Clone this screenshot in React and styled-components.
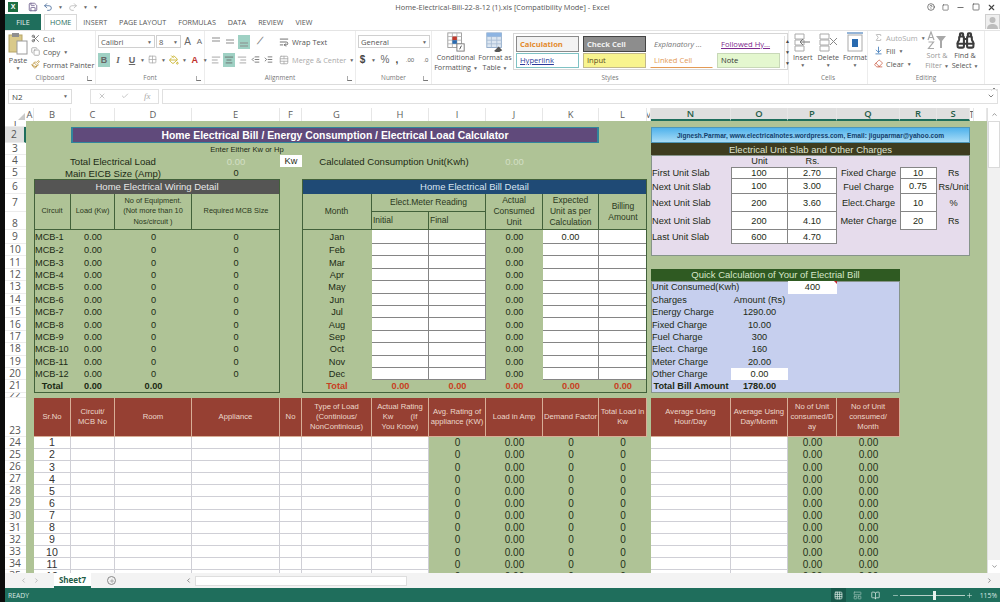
import React from "react";
import styled, { createGlobalStyle, css } from "styled-components";
import {
  Scissors, Copy, Paintbrush, Save, Undo2, Redo2, X, Check, Minus, Plus, Square, HelpCircle,
  AlignLeft, AlignCenter, AlignRight, WrapText, TableCellsMerge, PaintBucket, Grid2x2,
  Binoculars, Sigma, Eraser, ArrowDownToLine, ChevronUp, ChevronDown, ChevronLeft, ChevronRight,
  Grid3x3, LayoutPanelTop, BookOpen, Indent, Outdent,
} from "lucide-react";

const GREEN = "#afc396";
const TEAL = "#1f6e5c";
const RED = "#964033";
const UI = '"Open Sans", "Liberation Sans", sans-serif';
const SHEET = '"Liberation Sans", Arial, sans-serif';

const Global = createGlobalStyle`
  html, body { margin: 0; padding: 0; background: #0c0c0c; }
  * { box-sizing: border-box; }
`;

const Window = styled.div`
  width: 1000px;
  height: 602px;
  padding-left: 5px;
  background: #0c0c0c;
  overflow: hidden;
`;
const Frame = styled.div`
  display: flex;
  flex-direction: column;
  height: 602px;
  background: #fff;
  font-family: ${UI};
  color: #444;
`;

/* title bar */
const TitleBar = styled.div`
  height: 14px;
  display: grid;
  grid-template-columns: 1fr auto 1fr;
  align-items: center;
  padding: 0 3px;
  font-size: 7.4px;
  color: #555;
`;
const Quick = styled.div`
  display: flex;
  align-items: center;
  gap: 5px;
  color: #6a5a8a;
`;
const XlBadge = styled.div`
  width: 10px;
  height: 10px;
  background: #1d6f42;
  color: #fff;
  font: bold 7px/10px ${SHEET};
  text-align: center;
  margin-right: 5px;
`;
const WinButtons = styled.div`
  display: flex;
  justify-content: flex-end;
  align-items: center;
  gap: 7px;
  padding-right: 1px;
  color: #444;
`;

/* tabs */
const TabRow = styled.div`
  height: 16px;
  display: flex;
  align-items: stretch;
  font-size: 7.2px;
`;
const FileTab = styled.div`
  width: 36px;
  background: ${TEAL};
  color: #e8f2ee;
  display: flex;
  align-items: center;
  justify-content: center;
`;
const Tab = styled.div`
  padding: 0 5px 1px;
  margin-left: ${(p) => (p.$active ? 3 : 0)}px;
  display: flex;
  align-items: center;
  color: ${(p) => (p.$active ? "#1f6e5c" : "#555")};
  border: 1px solid ${(p) => (p.$active ? "#d8d8d8" : "transparent")};
  border-bottom: none;
`;
const AvatarBox = styled.div`
  margin-left: auto;
  margin-right: 0;
  width: 15px;
  height: 15px;
  display: flex;
`;

/* ribbon */
const Ribbon = styled.div`
  height: 55px;
  display: flex;
  border-top: 1px solid #e4e4e4;
  border-bottom: 1px solid #dcdcdc;
`;
const Group = styled.div`
  width: ${(p) => p.$w}px;
  display: flex;
  flex-direction: column;
  border-right: 1px solid #ececec;
`;
const GroupBody = styled.div`
  flex: 1;
  min-height: 0;
  display: flex;
  gap: ${(p) => p.$gap || 0}px;
  padding: ${(p) => p.$pad || "2px 2px 0"};
`;
const GroupLabel = styled.div`
  position: relative;
  height: 11px;
  font-size: 6.4px;
  line-height: 10px;
  text-align: center;
  color: #777;
  &::after {
    content: "";
    display: ${(p) => (p.$launcher ? "block" : "none")};
    position: absolute;
    right: 3px;
    bottom: 3px;
    width: 4px;
    height: 4px;
    border-left: 1px solid #aaa;
    border-bottom: 1px solid #777;
  }
`;
const Stack = styled.div`
  display: flex;
  flex-direction: column;
  align-items: ${(p) => p.$align || "flex-start"};
  gap: ${(p) => p.$gap || 0}px;
  width: ${(p) => (p.$w ? `${p.$w}px` : "auto")};
`;
const Line = styled.div`
  display: flex;
  align-items: center;
  gap: ${(p) => p.$gap || 3}px;
  height: 13px;
  font-size: 7.4px;
  color: ${(p) => p.$color || "#555"};
  white-space: nowrap;
`;
const BigLabel = styled.div`
  font-size: 7.2px;
  line-height: 10px;
  text-align: center;
  white-space: nowrap;
  color: ${(p) => p.$color || "#555"};
`;
const Field = styled.div`
  width: ${(p) => p.$w}px;
  height: 13px;
  border: 1px solid #d0d0d0;
  font-size: 7.6px;
  display: flex;
  align-items: center;
  justify-content: space-between;
  padding: 0 2px;
  color: #555;
`;
const ToolIcon = styled.div`
  width: ${(p) => p.$w || 12}px;
  height: 14px;
  display: flex;
  align-items: center;
  justify-content: center;
  background: ${(p) => (p.$on ? "#9fd1c4" : "transparent")};
  color: ${(p) => p.$color || "#666"};
  font: ${(p) => p.$font || `bold 9px ${SHEET}`};
  text-decoration: ${(p) => (p.$under ? "underline" : "none")};
`;
const Caret = styled.span`
  font-size: 5px;
  color: #666;
`;
const Gallery = styled.div`
  width: 275px;
  height: 37px;
  margin-top: 1px;
  border: 1px solid #d6d6d6;
  display: grid;
  grid-template-columns: repeat(4, 66px) 1fr;
  grid-template-rows: 1fr 1fr;
  gap: 1px;
  padding: 2px 0 1px 2px;
`;
const Chip = styled.div`
  margin-right: 3px;
  display: flex;
  align-items: center;
  padding-left: 3px;
  font: ${(p) => (p.$bold ? "bold " : "")}${(p) => (p.$italic ? "italic " : "")}7.6px ${UI};
  color: ${(p) => p.$color};
  background: ${(p) => p.$bg || "#fff"};
  border: 1px solid ${(p) => p.$border || "transparent"};
  border-bottom-color: ${(p) => p.$line || p.$border || "transparent"};
  text-decoration: ${(p) => (p.$under ? "underline" : "none")};
  white-space: nowrap;
`;
const GalleryScroll = styled.div`
  grid-column: 5;
  grid-row: 1 / span 2;
  border-left: 1px solid #e2e2e2;
  display: flex;
  flex-direction: column;
  align-items: center;
  justify-content: space-around;
  font-size: 5px;
`;
const Collapse = styled.div`
  padding: 45px 0 0 5px;
`;

/* formula bar */
const FormulaRow = styled.div`
  height: 16px;
  margin-top: 3px;
  display: flex;
  align-items: center;
  gap: 3px;
  padding: 0 2px 0 3px;
  margin-bottom: 4px;
`;
const NameBox = styled.div`
  width: 64px;
  height: 15px;
  border: 1px solid #dcdcdc;
  display: flex;
  align-items: center;
  justify-content: space-between;
  padding: 0 3px;
  font-size: 8px;
`;
const FxBox = styled.div`
  width: 69px;
  margin-left: 15px;
  height: 15px;
  border: 1px solid #e0e0e0;
  display: flex;
  align-items: center;
  justify-content: space-around;
  color: #aaa;
  font: italic 9px "Liberation Serif", serif;
`;
const FormulaInput = styled.div`
  flex: 1;
  height: 15px;
  border: 1px solid #e0e0e0;
  display: flex;
  justify-content: flex-end;
  align-items: center;
  padding-right: 2px;
`;

/* sheet */
const SheetRow = styled.div`
  display: flex;
  height: 465px;
`;
const colWidths = [21, 8, 37, 44, 77, 88, 22, 70, 57, 57, 57, 56, 48, 4, 80, 57, 49, 63, 37, 33, 4, 13];
const rowHeights = [
  13, 6, 16, 12, 12, 12, 15, 18, 18, 14,
  ...Array(12).fill(12.4),
  5, 39,
  ...Array(12).fill(12.15),
];
const Sheet = styled.div`
  width: 982px;
  height: 465px;
  overflow: hidden;
  display: grid;
  grid-template-columns: ${colWidths.map((w) => `${w}px`).join(" ")};
  grid-template-rows: ${rowHeights.map((h) => `${h}px`).join(" ")};
  background: linear-gradient(#fff, #fff) 0 0 / 100% 13px no-repeat,
    linear-gradient(#fff, #fff) 0 0 / 21px 100% no-repeat, ${GREEN};
  font-family: ${SHEET};
  color: #1c2a14;
`;
const place = css`
  grid-column: ${(p) => p.$c} / span ${(p) => p.$cs || 1};
  grid-row: ${(p) => p.$r + 1} / span ${(p) => p.$rs || 1};
`;
const Cell = styled.div`
  ${place}
  display: flex;
  align-items: center;
  justify-content: center;
  text-align: center;
  overflow: hidden;
  white-space: nowrap;
  min-width: 0;
`;
const Corner = styled.div`
  grid-column: 1;
  grid-row: 1;
  position: relative;
  &::after {
    content: "";
    position: absolute;
    right: 1px;
    bottom: 1px;
    border-left: 7px solid transparent;
    border-bottom: 7px solid #c9c9c9;
  }
`;
const ColHead = styled.div`
  grid-column: ${(p) => p.$c};
  grid-row: 1;
  display: flex;
  align-items: center;
  justify-content: center;
  overflow: hidden;
  font: ${(p) => (p.$on ? "600 " : "")}9.4px ${UI};
  color: ${(p) => (p.$on ? "#1f5c46" : "#5c5c5c")};
  background: ${(p) => (p.$on ? "#dfdfdf" : "#fff")};
  border-right: 1px solid #e6e6e6;
  border-bottom: ${(p) => (p.$on ? "2px solid #1f6e5c" : "none")};
`;
const RowHead = styled.div`
  grid-column: 1;
  grid-row: ${(p) => p.$r + 1};
  display: flex;
  align-items: ${(p) => (p.$tall ? "flex-end" : "center")};
  justify-content: center;
  overflow: hidden;
  padding-right: 1px;
  font: 10.2px/11px ${UI};
  color: #555;
  background: ${(p) => (p.$on ? "#dfdfdf" : "#fff")};
  border-bottom: 1px solid #ececec;
  border-right: ${(p) => (p.$on ? "2px solid #1f6e5c" : "none")};
`;
const Banner = styled(Cell)`
  background: #604a7b;
  border: 2px solid #31859c;
  border-width: 1px 2px;
  color: #fff;
  font-weight: bold;
  font-size: 10.4px;
`;
const Hint = styled(Cell)`
  font-size: 7.6px;
`;
const BigLabelCell = styled(Cell)`
  font-size: 9.6px;
`;
const GhostValue = styled(Cell)`
  font-size: 9.5px;
  color: #d3dfc5;
`;
const Plain = styled(Cell)`
  font-size: 9.2px;
  justify-content: ${(p) => (p.$left ? "flex-start" : "center")};
  padding-left: ${(p) => (p.$left ? "1px" : "0")};
  font-weight: ${(p) => (p.$bold ? "bold" : "normal")};
  color: ${(p) => p.$color || "inherit"};
`;
const WhiteBox = styled(Plain)`
  background: #fff;
`;
const Entry = styled(Plain)`
  background: #fff;
  border-right: 1px solid #858585;
  border-bottom: 1px solid #858585;
`;
const SectionHead = styled(Cell)`
  background: ${(p) => p.$bg};
  color: ${(p) => p.$color || "#e8e8e8"};
  font-size: 9.5px;
`;
const Outline = styled.div`
  ${place}
  border: 1px solid ${(p) => p.$color || "#42613a"};
  z-index: 2;
  pointer-events: none;
`;
const TableHead = styled(Cell)`
  font-size: ${(p) => p.$size || 7.4}px;
  line-height: ${(p) => (p.$size ? 11 : 10.5)}px;
  white-space: pre-line;
  color: #2a3820;
  border-right: ${(p) => (p.$last ? "none" : "1px solid #42613a")};
  border-bottom: 1px solid #42613a;
  justify-content: ${(p) => (p.$left ? "flex-start" : "center")};
  padding-left: ${(p) => (p.$left ? "1px" : "0")};
`;
const Panel = styled.div`
  ${place}
  background: ${(p) => p.$bg};
  border: 1px solid #86948a;
`;
const Credit = styled(Cell)`
  background: linear-gradient(#4fb2ec, #a8dcf6);
  border: 1px solid #4f97b8;
  color: #123e6c;
  font-weight: bold;
  font-size: 6.6px;
`;
const RedHead = styled(Cell)`
  background: ${RED};
  color: #ecd8cb;
  white-space: pre;
  font-size: 7.7px;
  line-height: 10px;
  border-right: 1px solid #d8ae97;
  border-bottom: 1px solid #d8ae97;
`;
const BlankRow = styled.div`
  ${place}
  background: #fff;
  border-right: 1px solid #cfcfd6;
  border-bottom: 1px solid #cfcfd6;
`;
const SrNo = styled(Cell)`
  background: #fff;
  font-size: 10.6px;
  color: #333;
  border-right: 1px solid #cfcfd6;
  border-bottom: 1px solid #cfcfd6;
`;
const Calc = styled(Cell)`
  font-size: 10px;
  color: #1f3116;
`;
const Marker = styled.span`
  position: absolute;
  top: 0;
  right: 0;
  border-top: 3px solid #c4262e;
  border-left: 3px solid transparent;
`;
const Anchor = styled(WhiteBox)`
  position: relative;
`;

/* scrollbar, sheet tabs, status */
const VScroll = styled.div`
  width: 13px;
  display: flex;
  flex-direction: column;
  justify-content: flex-start;
  background: #f1f1f1;
  border-left: 1px solid #e0e0e0;
  color: #555;
`;
const ScrollEnd = styled.div`
  height: 13px;
  background: #fff;
  display: flex;
  align-items: center;
  justify-content: center;
  margin-top: ${(p) => (p.$last ? "auto" : "0")};
`;
const ScrollThumb = styled.div`
  height: 47px;
  background: #fff;
  border: 1px solid #dadada;
`;
const TabBar = styled.div`
  height: 15px;
  display: flex;
  align-items: center;
  background: #f3f3f3;
  color: #999;
`;
const TabNav = styled.div`
  width: 49px;
  display: flex;
  justify-content: center;
  gap: 6px;
`;
const SheetTab = styled.div`
  width: 37px;
  height: 15px;
  background: #fff;
  border-bottom: 2px solid #1f6e5c;
  font: bold 8px/13px ${UI};
  text-align: center;
  color: #1f5c46;
`;
const AddSheet = styled.div`
  width: 9px;
  height: 9px;
  margin-left: 16px;
  border: 1px solid #888;
  border-radius: 50%;
  display: flex;
  align-items: center;
  justify-content: center;
  color: #777;
`;
const HScroll = styled.div`
  margin-left: 69px;
  flex: 1;
  height: 13px;
  display: flex;
  align-items: center;
  color: #444;
  padding-right: 7px;
`;
const HThumb = styled.div`
  width: 212px;
  height: 10px;
  margin: 0 auto 0 3px;
  background: #fff;
  border: 1px solid #dedede;
`;
const StatusBar = styled.div`
  height: 14px;
  background: ${TEAL};
  color: #d8e8e2;
  display: flex;
  align-items: center;
  padding: 0 3px;
  font-size: 6.8px;
`;
const StatusRight = styled.div`
  margin-left: auto;
  display: flex;
  align-items: center;
  padding-right: 0;
`;
const ViewIcon = styled.div`
  width: 15px;
  height: 14px;
  margin-right: 3.5px;
  display: flex;
  align-items: center;
  justify-content: center;
  background: ${(p) => (p.$on ? "#17584a" : "transparent")};
  opacity: ${(p) => (p.$dim ? 0.65 : 1)};
`;
const ZoomTrack = styled.div`
  position: relative;
  width: 65px;
  height: 1px;
  margin: 0 1px;
  background: #b8d0c8;
`;
const ZoomKnob = styled.span`
  position: absolute;
  left: 33px;
  top: -4px;
  width: 3px;
  height: 9px;
  background: #e8f2ee;
`;
const ZoomGroup = styled.div`
  display: flex;
  align-items: center;
  margin: 0 7px 0 5px;
`;

const AvatarIcon = () => (
  <svg width="15" height="15" viewBox="0 0 15 15">
    <rect width="15" height="15" fill="#cfcfcf" />
    <rect x="1" y="1" width="13" height="14" fill="#efefef" />
    <circle cx="7.5" cy="6" r="3" fill="#bdbdbd" />
    <path d="M2 15c0-4 3-5 5.500-5s5.500 1 5.500 5z" fill="#bdbdbd" />
  </svg>
);
const PasteIcon = () => (
  <svg width="20" height="23" viewBox="0 0 20 23">
    <rect x="1" y="3" width="13" height="17" fill="#d9c98a" stroke="#b7a567" />
    <rect x="4" y="1" width="7" height="4" fill="#8f8f8f" />
    <rect x="9" y="9" width="10" height="13" fill="#fff" stroke="#9a9a9a" />
  </svg>
);
const CondFormatIcon = () => (
  <svg width="20" height="22" viewBox="0 0 20 22">
    <rect x="1" y="1" width="15" height="16" fill="#fff" stroke="#9a9a9a" />
    <path d="M1 5h15M1 9h15M1 13h15M6 1v16M11 1v16" stroke="#b5b5b5" fill="none" />
    <rect x="6" y="5" width="5" height="4" fill="#c0392b" />
    <rect x="6" y="9" width="5" height="4" fill="#2a6bb0" />
    <rect x="11" y="13" width="8" height="8" fill="#fff" stroke="#777" />
    <path d="M14 19l2-4" stroke="#444" />
  </svg>
);
const TableIcon = () => (
  <svg width="20" height="22" viewBox="0 0 20 22">
    <rect x="1" y="1" width="16" height="16" fill="#dce6f1" stroke="#8ea9c8" />
    <path d="M1 5h16M1 9h16M1 13h16M6 1v16M12 1v16" stroke="#a9bdd4" fill="none" />
    <rect x="1" y="1" width="16" height="4" fill="#8db4e2" />
    <path d="M9 21l5-5 4 4-5 3z" fill="#555" />
  </svg>
);
const CellsIcon = ({ mark }) => (
  <svg width="20" height="20" viewBox="0 0 20 20">
    <path d="M2 2h9v5H2zM2 8h9v5H2zM2 14h9v5H2z" fill="#fff" stroke="#aaa" />
    {mark === "in" && <path d="M17 10H7m3-3l-3 3 3 3" stroke="#777" fill="none" />}
    {mark === "del" && <path d="M12 6l7 7m0-7l-7 7" stroke="#888" fill="none" />}
  </svg>
);
const FormatIcon = () => (
  <svg width="20" height="20" viewBox="0 0 20 20">
    <rect x="3" y="3" width="14" height="16" fill="#fff" stroke="#aaa" />
    <rect x="7" y="7" width="6" height="8" fill="#2a6bb0" />
    <path d="M2 1h16" stroke="#2a6bb0" />
  </svg>
);
const SortIcon = () => (
  <svg width="20" height="19" viewBox="0 0 20 19">
    <path d="M1 9L4 1l3 8M2.200 6.500h3.600M1.500 11h5l-5 6.500h5.500" stroke="#a8a8a8" strokeWidth="1.200" fill="none" />
    <path d="M9 5h10l-4 5v7h-2v-7z" fill="#a8a8a8" />
  </svg>
);
const VAlignIcon = ({ y }) => (
  <svg width="10" height="10" viewBox="0 0 10 10">
    <path d={`M1 ${y}h8M1 ${y + 3}h8`} stroke="#8b8b8b" fill="none" />
  </svg>
);

const columns = [
  [2, "A"], [3, "B"], [4, "C"], [5, "D"], [6, "E"], [7, "F"], [8, "G"], [9, "H"], [10, "I"], [11, "J"],
  [12, "K"], [13, "L"], [14, "M"], [15, "N", 1], [16, "O", 1], [17, "P", 1], [18, "Q", 1], [19, "R", 1],
  [20, "S", 1], [21, "T"], [22, ""],
];
const months = ["Jan", "Feb", "Mar", "Apr", "May", "Jun", "Jul", "Aug", "Sep", "Oct", "Nov", "Dec"];
const slabs = [
  ["First Unit Slab", "100", "2.70", "Fixed Charge", "10", "Rs"],
  ["Next Unit Slab", "100", "3.00", "Fuel Charge", "0.75", "Rs/Unit"],
  ["Next Unit Slab", "200", "3.60", "Elect.Charge", "10", "%"],
  ["Next Unit Slab", "200", "4.10", "Meter Charge", "20", "Rs"],
  ["Last Unit Slab", "600", "4.70"],
];
const quick = [
  ["Charges", "Amount (Rs)"],
  ["Energy Charge", "1290.00"],
  ["Fixed Charge", "10.00"],
  ["Fuel Charge", "300"],
  ["Elect. Charge", "160"],
  ["Meter Charge", "20.00"],
];
const loadHeads = [
  [3, "Sr.No"], [4, "Circuit/\nMCB No"], [5, "Room"], [6, "Appliance"], [7, "No"],
  [8, "Type of Load\n(Continious/\nNonContinious)"], [9, "Actual Rating\nKw        (If\nYou Know)"],
  [10, "Avg. Rating of\nappliance (KW)"], [11, "Load in Amp"], [12, "Demand Factor"], [13, "Total Load in\nKw"],
  [15, "Average Using\nHour/Day"], [16, "Average Using\nDay/Month"],
  [17, "No of Unit\nconsumed/D\nay"], [18, "No of Unit\nconsumed/\nMonth"],
];
const range = (a, b) => Array.from({ length: b - a + 1 }, (_, i) => a + i);

function Toolbar() {
  return (
    <>
      <TitleBar>
        <Quick>
          <XlBadge>X</XlBadge>
          <Save size={10} />
          <Undo2 size={10} color="#4a6d9c" />
          <Caret>▼</Caret>
          <Redo2 size={10} color="#bbb" />
          <Caret>▼</Caret>
          <Caret>▼</Caret>
        </Quick>
        <div>Home-Electrical-Bill-22-8-12 (1).xls  [Compatibility Mode] - Excel</div>
        <WinButtons>
          <HelpCircle size={8} />
          <Square size={7} />
          <Minus size={9} />
          <Square size={8} />
          <X size={9} strokeWidth={3} />
        </WinButtons>
      </TitleBar>
      <TabRow>
        <FileTab>FILE</FileTab>
        <Tab $active>HOME</Tab>
        <Tab>INSERT</Tab>
        <Tab>PAGE LAYOUT</Tab>
        <Tab>FORMULAS</Tab>
        <Tab>DATA</Tab>
        <Tab>REVIEW</Tab>
        <Tab>VIEW</Tab>
        <AvatarBox><AvatarIcon /></AvatarBox>
      </TabRow>
      <Ribbon>
        <Group $w={91}>
          <GroupBody $gap={3} $pad="1px 2px 0 3px">
            <Stack $align="center" $w={26}>
              <PasteIcon />
              <BigLabel>Paste</BigLabel>
              <Caret>▼</Caret>
            </Stack>
            <Stack>
              <Line><Scissors size={9} />Cut</Line>
              <Line><Copy size={9} color="#999" />Copy <Caret>▼</Caret></Line>
              <Line><Paintbrush size={9} color="#b58a2a" />Format Painter</Line>
            </Stack>
          </GroupBody>
          <GroupLabel $launcher>Clipboard</GroupLabel>
        </Group>
        <Group $w={109}>
          <GroupBody $pad="4px 0 0 2px">
            <Stack $gap={5}>
              <Line $gap={1}>
                <Field $w={57}>Calibri<Caret>▼</Caret></Field>
                <Field $w={25}>8<Caret>▼</Caret></Field>
                <ToolIcon $w={11} $font={`10px ${SHEET}`}>A</ToolIcon>
                <ToolIcon $w={11} $font={`8px ${SHEET}`}>A</ToolIcon>
              </Line>
              <Line $gap={2}>
                <ToolIcon $on>B</ToolIcon>
                <ToolIcon $font={`italic bold 9px "Liberation Serif", serif`}>I</ToolIcon>
                <ToolIcon $under>U</ToolIcon>
                <Caret>▼</Caret>
                <ToolIcon $color="#aaa"><Grid2x2 size={9} /></ToolIcon>
                <Caret>▼</Caret>
                <ToolIcon $color="#c7b020"><PaintBucket size={10} /></ToolIcon>
                <Caret>▼</Caret>
                <ToolIcon $color="#c0302a">A</ToolIcon>
                <Caret>▼</Caret>
              </Line>
            </Stack>
          </GroupBody>
          <GroupLabel $launcher>Font</GroupLabel>
        </Group>
        <Group $w={151}>
          <GroupBody $pad="4px 0 0 5px" $gap={5}>
            <Stack $gap={5}>
              <Line $gap={2}>
                <ToolIcon><VAlignIcon y={1} /></ToolIcon>
                <ToolIcon><VAlignIcon y={3} /></ToolIcon>
                <ToolIcon $on><VAlignIcon y={6} /></ToolIcon>
                <ToolIcon $color="#888" $w={16}>⟋</ToolIcon>
              </Line>
              <Line $gap={1}>
                <ToolIcon $color="#999"><AlignLeft size={10} /></ToolIcon>
                <ToolIcon $on><AlignCenter size={10} /></ToolIcon>
                <ToolIcon $color="#999"><AlignRight size={10} /></ToolIcon>
                <ToolIcon $color="#555"><Outdent size={9} /></ToolIcon>
                <ToolIcon $color="#555"><Indent size={9} /></ToolIcon>
              </Line>
            </Stack>
            <Stack $gap={5}>
              <Line><WrapText size={10} />Wrap Text</Line>
              <Line $color="#aaa"><TableCellsMerge size={10} />Merge &amp; Center <Caret>▼</Caret></Line>
            </Stack>
          </GroupBody>
          <GroupLabel $launcher>Alignment</GroupLabel>
        </Group>
        <Group $w={76}>
          <GroupBody $pad="4px 0 0 2px">
            <Stack $gap={5}>
              <Field $w={72}>General<Caret>▼</Caret></Field>
              <Line $gap={4}>
                <ToolIcon $w={9} $font={`bold 10px ${SHEET}`} $color="#444">$</ToolIcon>
                <Caret>▼</Caret>
                <ToolIcon $w={10} $font={`10px ${SHEET}`}>%</ToolIcon>
                <ToolIcon $w={6} $font={`bold 10px ${SHEET}`} $color="#444">,</ToolIcon>
                <ToolIcon $font={`6px ${SHEET}`}>.00</ToolIcon>
                <ToolIcon $font={`6px ${SHEET}`}>.0</ToolIcon>
              </Line>
            </Stack>
          </GroupBody>
          <GroupLabel $launcher>Number</GroupLabel>
        </Group>
        <Group $w={357}>
          <GroupBody $pad="1px 0 0 3px" $gap={3}>
            <Stack $align="center" $w={42}>
              <CondFormatIcon />
              <BigLabel>Conditional</BigLabel>
              <BigLabel>Formatting <Caret>▼</Caret></BigLabel>
            </Stack>
            <Stack $align="center" $w={30}>
              <TableIcon />
              <BigLabel>Format as</BigLabel>
              <BigLabel>Table <Caret>▼</Caret></BigLabel>
            </Stack>
            <Gallery>
              <Chip $bold $color="#e38a2c" $bg="#f2f2f2" $border="#8a8a8a">Calculation</Chip>
              <Chip $bold $color="#f0f0f0" $bg="#8d8d8d" $border="#444">Check Cell</Chip>
              <Chip $italic $color="#777">Explanatory ...</Chip>
              <Chip $under $color="#7d2a8c">Followed Hy...</Chip>
              <GalleryScroll>
                <span>▲</span><span>▼</span><span>▼</span>
              </GalleryScroll>
              <Chip $under $color="#2a3a9a" $border="#7fc2c4">Hyperlink</Chip>
              <Chip $color="#5a4a20" $bg="#f8f48e" $border="#c2b98a">Input</Chip>
              <Chip $color="#e39a55" $line="#e39a55">Linked Cell</Chip>
              <Chip $color="#333" $bg="#e4f7cf" $border="#c8d8b8">Note</Chip>
            </Gallery>
          </GroupBody>
          <GroupLabel>Styles</GroupLabel>
        </Group>
        <Group $w={79}>
          <GroupBody $pad="1px 0 0 3px" $gap={3}>
            <Stack $align="center" $w={22}>
              <CellsIcon mark="in" />
              <BigLabel>Insert</BigLabel>
              <Caret>▼</Caret>
            </Stack>
            <Stack $align="center" $w={24}>
              <CellsIcon mark="del" />
              <BigLabel>Delete</BigLabel>
              <Caret>▼</Caret>
            </Stack>
            <Stack $align="center" $w={24}>
              <FormatIcon />
              <BigLabel>Format</BigLabel>
              <Caret>▼</Caret>
            </Stack>
          </GroupBody>
          <GroupLabel>Cells</GroupLabel>
        </Group>
        <Group $w={117}>
          <GroupBody $pad="0 0 0 6px" $gap={3}>
            <Stack $w={48}>
              <Line $color="#aaa"><Sigma size={9} />AutoSum <Caret>▼</Caret></Line>
              <Line><ArrowDownToLine size={9} color="#2a6bb0" />Fill <Caret>▼</Caret></Line>
              <Line><Eraser size={9} color="#c8553d" />Clear <Caret>▼</Caret></Line>
            </Stack>
            <Stack $align="center" $w={24}>
              <SortIcon />
              <BigLabel $color="#999">Sort &amp;</BigLabel>
              <BigLabel $color="#999">Filter <Caret>▼</Caret></BigLabel>
            </Stack>
            <Stack $align="center" $w={26}>
              <Binoculars size={19} color="#3c3c3c" strokeWidth={2.6} />
              <BigLabel>Find &amp;</BigLabel>
              <BigLabel>Select <Caret>▼</Caret></BigLabel>
            </Stack>
          </GroupBody>
          <GroupLabel>Editing</GroupLabel>
        </Group>
        <Collapse><ChevronUp size={8} /></Collapse>
      </Ribbon>
      <FormulaRow>
        <NameBox>N2<Caret>▼</Caret></NameBox>
        <FxBox><X size={8} /><Check size={8} /><span>fx</span></FxBox>
        <FormulaInput><ChevronDown size={8} /></FormulaInput>
      </FormulaRow>
    </>
  );
}

function SheetGrid() {
  return (
    <Sheet>
      <Corner />
      {columns.map(([c, name, on]) => (
        <ColHead key={c} $c={c} $on={on}>{name}</ColHead>
      ))}
      {range(1, 35).map((r) => (
        <RowHead key={r} $r={r} $on={r === 2} $tall={r === 8 || r === 23}>{r}</RowHead>
      ))}

      <Banner $c={4} $cs={9} $r={2}>Home Electrical Bill / Energy Consumption / Electrical Load Calculator</Banner>
      <Hint $c={6} $cs={2} $r={3}>Enter Either Kw or Hp</Hint>
      <BigLabelCell $c={3} $cs={3} $r={4}>Total Electrical Load</BigLabelCell>
      <GhostValue $c={6} $r={4}>0.00</GhostValue>
      <WhiteBox $c={7} $r={4}>Kw</WhiteBox>
      <BigLabelCell $c={8} $cs={3} $r={4}>Calculated Consumption Unit(Kwh)</BigLabelCell>
      <GhostValue $c={11} $r={4}>0.00</GhostValue>
      <BigLabelCell $c={3} $cs={3} $r={5}>Main EICB Size (Amp)</BigLabelCell>
      <Plain $c={6} $r={5}>0</Plain>

      {/* wiring detail */}
      <SectionHead $c={3} $cs={4} $r={6} $bg="#555554">Home Electrical Wiring Detail</SectionHead>
      <TableHead $c={3} $r={7} $rs={2}>Circuit</TableHead>
      <TableHead $c={4} $r={7} $rs={2}>Load (Kw)</TableHead>
      <TableHead $c={5} $r={7} $rs={2}>{"No of Equipment.\n(Not more than 10\nNos/circuit )"}</TableHead>
      <TableHead $c={6} $r={7} $rs={2} $last>Required MCB Size</TableHead>
      {range(1, 12).map((n) => (
        <React.Fragment key={n}>
          <Plain $c={3} $r={n + 8} $left>MCB-{n}</Plain>
          <Plain $c={4} $r={n + 8}>0.00</Plain>
          <Plain $c={5} $r={n + 8}>0</Plain>
          <Plain $c={6} $r={n + 8}>0</Plain>
        </React.Fragment>
      ))}
      <Plain $c={3} $r={21} $bold>Total</Plain>
      <Plain $c={4} $r={21} $bold>0.00</Plain>
      <Plain $c={5} $r={21} $bold>0.00</Plain>
      <Outline $c={3} $cs={4} $r={6} $rs={16} />

      {/* bill detail */}
      <SectionHead $c={8} $cs={6} $r={6} $bg="#1f4a75" $color="#d8e4f0">Home Electrical Bill Detail</SectionHead>
      <TableHead $c={8} $r={7} $rs={2} $size={8.5}>Month</TableHead>
      <TableHead $c={9} $cs={2} $r={7} $size={8.5}>Elect.Meter Reading</TableHead>
      <TableHead $c={9} $r={8} $size={8.5} $left>Initial</TableHead>
      <TableHead $c={10} $r={8} $size={8.5} $left>Final</TableHead>
      <TableHead $c={11} $r={7} $rs={2} $size={8.5}>{"Actual\nConsumed\nUnit"}</TableHead>
      <TableHead $c={12} $r={7} $rs={2} $size={8.5}>{"Expected\nUnit as per\nCalculation"}</TableHead>
      <TableHead $c={13} $r={7} $rs={2} $size={8.5} $last>{"Billing\nAmount"}</TableHead>
      {months.map((m, i) => (
        <React.Fragment key={m}>
          <Plain $c={8} $r={i + 9}>{m}</Plain>
          <Entry $c={9} $r={i + 9} />
          <Entry $c={10} $r={i + 9} />
          <Plain $c={11} $r={i + 9}>0.00</Plain>
          <Entry $c={12} $r={i + 9}>{i === 0 ? "0.00" : ""}</Entry>
          <Entry $c={13} $r={i + 9} />
        </React.Fragment>
      ))}
      <Plain $c={8} $r={21} $bold $color="#c8401f">Total</Plain>
      {[9, 10, 11, 12, 13].map((c) => (
        <Plain key={c} $c={c} $r={21} $bold $color="#c8401f">0.00</Plain>
      ))}
      <Outline $c={8} $cs={6} $r={6} $rs={16} />

      {/* unit slabs */}
      <Credit $c={15} $cs={6} $r={2}>Jignesh.Parmar, www.electricalnotes.wordpress.com, Email: jiguparmar@yahoo.com</Credit>
      <SectionHead $c={15} $cs={6} $r={3} $bg="#3e3c1f" $color="#dfe3cf">Electrical Unit Slab and Other Charges</SectionHead>
      <Panel $c={15} $cs={6} $r={4} $rs={7} $bg="#e6dcec" />
      <Plain $c={16} $r={4}>Unit</Plain>
      <Plain $c={17} $r={4}>Rs.</Plain>
      {slabs.map(([name, unit, rate, charge, value, suffix], i) => (
        <React.Fragment key={i}>
          <Plain $c={15} $r={i + 5} $left>{name}</Plain>
          <Entry $c={16} $r={i + 5}>{unit}</Entry>
          <Entry $c={17} $r={i + 5}>{rate}</Entry>
          {charge && (
            <>
              <Plain $c={18} $r={i + 5}>{charge}</Plain>
              <Entry $c={19} $r={i + 5}>{value}</Entry>
              <Plain $c={20} $r={i + 5}>{suffix}</Plain>
            </>
          )}
        </React.Fragment>
      ))}
      <Outline $c={16} $cs={2} $r={5} $rs={5} $color="#858585" />
      <Outline $c={19} $r={5} $rs={4} $color="#858585" />

      {/* quick calculation */}
      <SectionHead $c={15} $cs={4} $r={12} $bg="#2f5a22" $color="#d6e6c8">Quick Calculation of Your of Electrial Bill</SectionHead>
      <Panel $c={15} $cs={4} $r={13} $rs={9} $bg="#c6cfee" />
      <Plain $c={15} $cs={2} $r={13} $left>Unit Consumed(Kwh)</Plain>
      <Anchor $c={17} $r={13}>400<Marker /></Anchor>
      {quick.map(([name, val], i) => (
        <React.Fragment key={name}>
          <Plain $c={15} $r={i + 14} $left>{name}</Plain>
          <Plain $c={16} $r={i + 14}>{val}</Plain>
        </React.Fragment>
      ))}
      <Plain $c={15} $r={20} $left>Other Charge</Plain>
      <WhiteBox $c={16} $r={20}>0.00</WhiteBox>
      <Plain $c={15} $r={21} $bold>Total Bill Amount</Plain>
      <Plain $c={16} $r={21} $bold>1780.00</Plain>

      {/* load table */}
      {loadHeads.map(([c, text]) => (
        <RedHead key={c} $c={c} $r={23}>{text}</RedHead>
      ))}
      {range(24, 35).map((r, i) => (
        <React.Fragment key={r}>
          <SrNo $c={3} $r={r}>{i + 1}</SrNo>
          {[4, 5, 6, 7, 8, 9, 15, 16].map((c) => (
            <BlankRow key={c} $c={c} $r={r} />
          ))}
          <Calc $c={10} $r={r}>0</Calc>
          <Calc $c={11} $r={r}>0.00</Calc>
          <Calc $c={12} $r={r}>0</Calc>
          <Calc $c={13} $r={r}>0</Calc>
          <Calc $c={17} $r={r}>0.00</Calc>
          <Calc $c={18} $r={r}>0.00</Calc>
        </React.Fragment>
      ))}
    </Sheet>
  );
}

export default function App() {
  return (
    <Window>
      <Global />
      <Frame>
        <Toolbar />
        <SheetRow>
          <SheetGrid />
          <VScroll>
            <ScrollEnd><ChevronUp size={7} /></ScrollEnd>
            <ScrollThumb />
            <ScrollEnd $last><ChevronDown size={7} /></ScrollEnd>
          </VScroll>
        </SheetRow>
        <TabBar>
          <TabNav><ChevronLeft size={7} /><ChevronRight size={7} /></TabNav>
          <SheetTab>Sheet7</SheetTab>
          <AddSheet><Plus size={6} /></AddSheet>
          <HScroll>
            <ChevronLeft size={7} />
            <HThumb />
            <ChevronRight size={7} />
          </HScroll>
        </TabBar>
        <StatusBar>
          READY
          <StatusRight>
            <ViewIcon $on><Grid3x3 size={9} /></ViewIcon>
            <ViewIcon $dim><LayoutPanelTop size={9} /></ViewIcon>
            <ViewIcon><BookOpen size={9} /></ViewIcon>
            <ZoomGroup>
              <Minus size={7} />
              <ZoomTrack><ZoomKnob /></ZoomTrack>
              <Plus size={7} />
            </ZoomGroup>
            <span>115%</span>
          </StatusRight>
        </StatusBar>
      </Frame>
    </Window>
  );
}
